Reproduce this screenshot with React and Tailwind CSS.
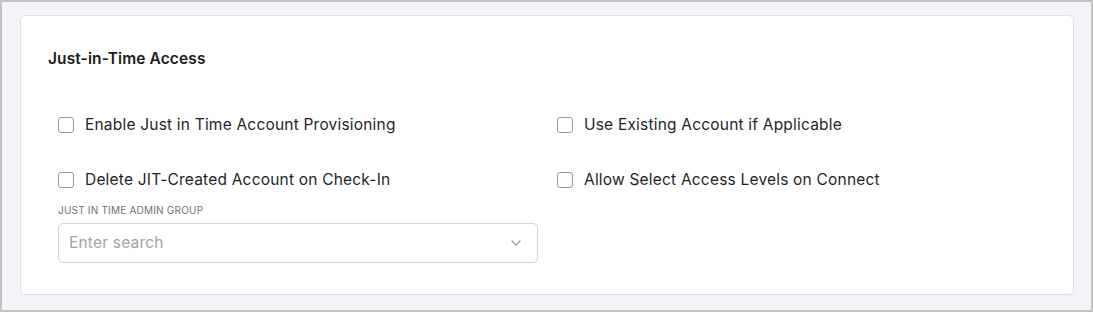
import React from "react";

function Check({ label }) {
  return (
    <label className="flex items-center h-[22px]">
      <span className="w-[16px] h-[16px] rounded-[3px] border border-[#9a9a9a] bg-white shrink-0" />
      <span className="ml-[11px] text-[15.5px] text-[#1f1f1f] leading-none tracking-[0.2px]">{label}</span>
    </label>
  );
}

export default function App() {
  return (
    <div
      className="w-[1093px] h-[312px] border-2 border-[#c3c3c3] bg-[#f3f4f7] pt-[13px] pl-[18px] pr-[17px] pb-[15px]"
      style={{ fontFamily: "Inter, 'Noto Sans', sans-serif" }}
    >
      <div className="h-full bg-white border border-[#dcdeeb] rounded-[5px] pl-[27px] pt-[33px]">
        <h2 className="text-[15.5px] font-semibold text-[#1c1c1c] leading-[20px] tracking-[0.1px]">
          Just-in-Time Access
        </h2>
        <div className="pl-[10px] mt-[45px]">
          <div className="flex">
            <div className="w-[499px]">
              <Check label="Enable Just in Time Account Provisioning" />
            </div>
            <Check label="Use Existing Account if Applicable" />
          </div>
          <div className="flex mt-[33px]">
            <div className="w-[499px]">
              <Check label="Delete JIT-Created Account on Check-In" />
            </div>
            <Check label="Allow Select Access Levels on Connect" />
          </div>
          <div className="mt-[13px] text-[10px] text-[#707070] uppercase leading-[12px] tracking-[0.2px]">
            Just in time admin group
          </div>
          <div className="mt-[7px] w-[480px] h-[40px] border border-[#d6d6d6] rounded-[5px] flex items-center justify-between pl-[10px] pr-[16px]">
            <span className="text-[15.5px] text-[#a3a3a3] tracking-[0.2px]">Enter search</span>
            <svg width="10" height="6" viewBox="0 0 10 6" fill="none">
              <path d="M1 1l4 4 4-4" stroke="#9a9a9a" strokeWidth="1.3" strokeLinecap="round" strokeLinejoin="round" />
            </svg>
          </div>
        </div>
      </div>
    </div>
  );
}
